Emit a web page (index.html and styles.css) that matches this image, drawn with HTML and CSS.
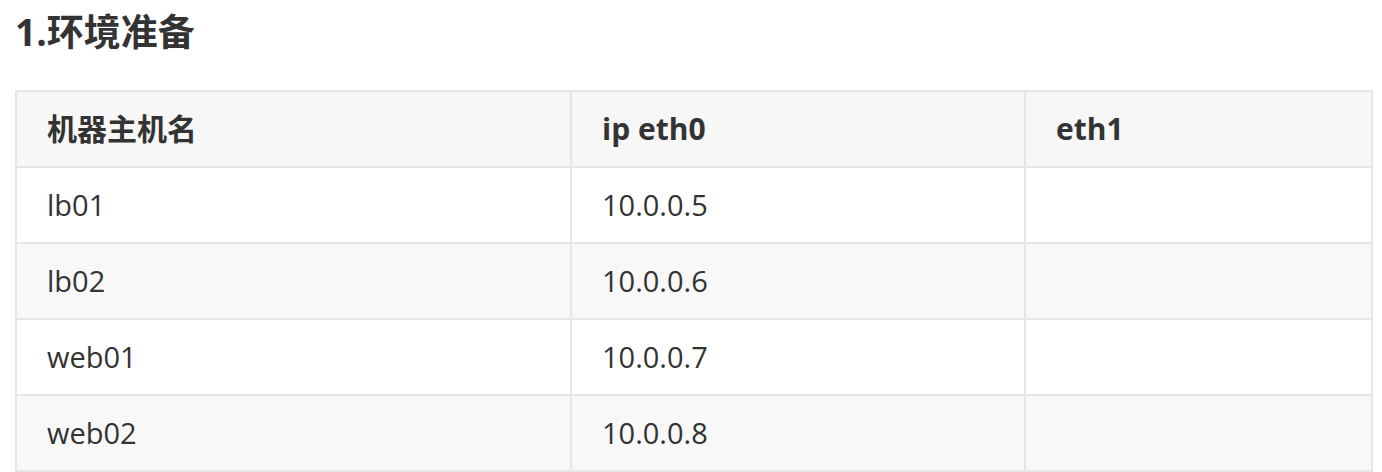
FILE: index.html
```html
<!DOCTYPE html>
<html lang="zh">
<head>
<meta charset="utf-8">
<link rel="stylesheet" href="styles.css">
</head>
<body>
<div class="page">
  <h2 class="title">1.环境准备</h2>
  <table class="hosts">
    <colgroup>
      <col class="c1"><col class="c2"><col class="c3">
    </colgroup>
    <thead>
      <tr><th>机器主机名</th><th>ip eth0</th><th>eth1</th></tr>
    </thead>
    <tbody>
      <tr><td>lb01</td><td>10.0.0.5</td><td></td></tr>
      <tr><td>lb02</td><td>10.0.0.6</td><td></td></tr>
      <tr><td>web01</td><td>10.0.0.7</td><td></td></tr>
      <tr><td>web02</td><td>10.0.0.8</td><td></td></tr>
    </tbody>
  </table>
</div>
</body>
</html>
```

FILE: styles.css
```css
html, body {
  margin: 0;
  padding: 0;
  background: #fff;
}
.page {
  padding: 6px 0 0 15px;
  font-family: "Open Sans", "Noto Sans CJK SC", sans-serif;
  color: #333;
}
.title {
  margin: 0 0 33px 0;
  font-size: 37px;
  line-height: 51px;
  font-weight: 700;
  color: #333;
}
.hosts {
  border-collapse: collapse;
  font-size: 29px;
  table-layout: fixed;
  width: 1356px;
}
.c1 { width: 555px; }
.c2 { width: 454px; }
.c3 { width: 347px; }
.hosts th, .hosts td {
  border: 2px solid #e6e6e6;
  padding: 0 30px;
  height: 74px;
  text-align: left;
  vertical-align: middle;
  line-height: 40px;
}
.hosts th {
  font-weight: 700;
  font-size: 30px;
  background: #f7f7f7;
}
.hosts tbody tr:nth-child(even) td {
  background: #f8f8f8;
}
```
